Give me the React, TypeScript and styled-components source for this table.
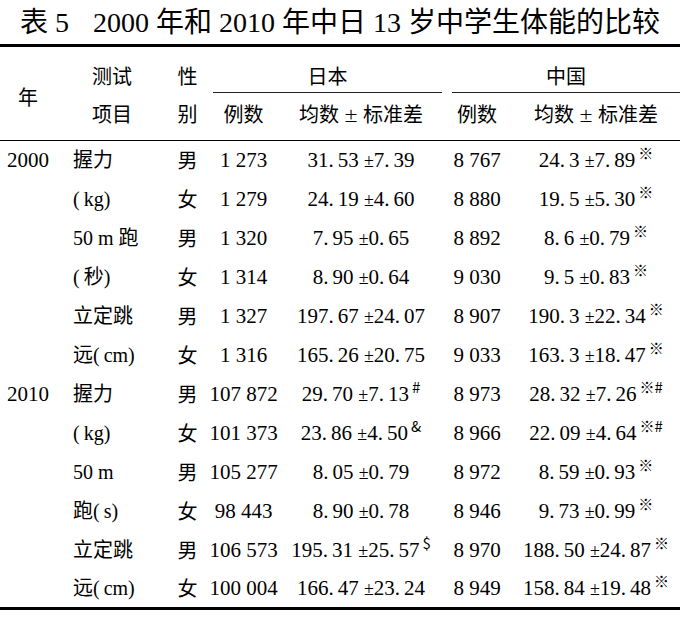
import { Fragment } from "react";
import styled, { createGlobalStyle } from "styled-components";

type Row = {
  year?: string;
  item: string;
  sex: string;
  jpN: string;
  jpMean: string;
  jpMark?: string;
  cnN: string;
  cnMean: string;
  cnMark?: string;
};

const rows: Row[] = [
  { year: "2000", item: "握力", sex: "男", jpN: "1 273", jpMean: "31.53 ±7.39", cnN: "8 767", cnMean: "24.3 ±7.89", cnMark: "※" },
  { item: "(kg)", sex: "女", jpN: "1 279", jpMean: "24.19 ±4.60", cnN: "8 880", cnMean: "19.5 ±5.30", cnMark: "※" },
  { item: "50 m 跑", sex: "男", jpN: "1 320", jpMean: "7.95 ±0.65", cnN: "8 892", cnMean: "8.6 ±0.79", cnMark: "※" },
  { item: "(秒)", sex: "女", jpN: "1 314", jpMean: "8.90 ±0.64", cnN: "9 030", cnMean: "9.5 ±0.83", cnMark: "※" },
  { item: "立定跳", sex: "男", jpN: "1 327", jpMean: "197.67 ±24.07", cnN: "8 907", cnMean: "190.3 ±22.34", cnMark: "※" },
  { item: "远(cm)", sex: "女", jpN: "1 316", jpMean: "165.26 ±20.75", cnN: "9 033", cnMean: "163.3 ±18.47", cnMark: "※" },
  { year: "2010", item: "握力", sex: "男", jpN: "107 872", jpMean: "29.70 ±7.13", jpMark: "#", cnN: "8 973", cnMean: "28.32 ±7.26", cnMark: "※#" },
  { item: "(kg)", sex: "女", jpN: "101 373", jpMean: "23.86 ±4.50", jpMark: "&", cnN: "8 966", cnMean: "22.09 ±4.64", cnMark: "※#" },
  { item: "50 m", sex: "男", jpN: "105 277", jpMean: "8.05 ±0.79", cnN: "8 972", cnMean: "8.59 ±0.93", cnMark: "※" },
  { item: "跑(s)", sex: "女", jpN: "98 443", jpMean: "8.90 ±0.78", cnN: "8 946", cnMean: "9.73 ±0.99", cnMark: "※" },
  { item: "立定跳", sex: "男", jpN: "106 573", jpMean: "195.31 ±25.57", jpMark: "$", cnN: "8 970", cnMean: "188.50 ±24.87", cnMark: "※" },
  { item: "远(cm)", sex: "女", jpN: "100 004", jpMean: "166.47 ±23.24", cnN: "8 949", cnMean: "158.84 ±19.48", cnMark: "※" },
];

// decimals in the print have a little gap after the point
const Decimal = ({ text }: { text: string }) => (
  <>
    {text.split(".").map((part, i, arr) => (
      <Fragment key={i}>
        {part}
        {i < arr.length - 1 && <Dot>.</Dot>}
      </Fragment>
    ))}
  </>
);

// the opening paren is set a bit loose, "( kg)"
const Item = ({ text }: { text: string }) => (
  <>
    {text.split("(").map((part, i, arr) => (
      <Fragment key={i}>
        {part}
        {i < arr.length - 1 && <Paren>(</Paren>}
      </Fragment>
    ))}
  </>
);

const Mean = ({ text, mark }: { text: string; mark?: string }) => {
  const [mean, sd] = text.split(" ±");
  return (
    <>
      <Decimal text={mean} /> <Pm>±</Pm>
      <Decimal text={sd} />
      {mark && <Mark>{mark}</Mark>}
    </>
  );
};

const App = () => {
  return (
    <Page>
      <GlobalStyle />
      <Title>
        表 5<TitleGap />
        2000 年和 2010 年中日 13 岁中学生体能的比较
      </Title>
      <Table>
        <colgroup>
          <col style={{ width: 56 }} />
          <col style={{ width: 112 }} />
          <col style={{ width: 39 }} />
          <col style={{ width: 73 }} />
          <col style={{ width: 162 }} />
          <col style={{ width: 70 }} />
          <col style={{ width: 168 }} />
        </colgroup>
        <thead>
          <TopHeadRow>
            <YearHead rowSpan={2}>年</YearHead>
            <Head>测试</Head>
            <Head>性</Head>
            <GroupHead colSpan={2}>
              <GroupLabel $inset={6}>日本</GroupLabel>
            </GroupHead>
            <GroupHead colSpan={2}>
              <GroupLabel $inset={10}>中国</GroupLabel>
            </GroupHead>
          </TopHeadRow>
          <SubHeadRow>
            <Head>项目</Head>
            <Head>别</Head>
            <Head>例数</Head>
            <Head>
              均数 <HeadPm>±</HeadPm> 标准差
            </Head>
            <Head>例数</Head>
            <Head>
              均数 <HeadPm>±</HeadPm> 标准差
            </Head>
          </SubHeadRow>
        </thead>
        <tbody>
          {rows.map((r, i) => (
            <BodyRow key={i}>
              <YearCell>{r.year}</YearCell>
              <ItemCell>
                <Item text={r.item} />
              </ItemCell>
              <SexCell>{r.sex}</SexCell>
              <NumCell>{r.jpN}</NumCell>
              <NumCell>
                <Mean text={r.jpMean} mark={r.jpMark} />
              </NumCell>
              <NumCell>{r.cnN}</NumCell>
              <NumCell>
                <Mean text={r.cnMean} mark={r.cnMark} />
              </NumCell>
            </BodyRow>
          ))}
        </tbody>
      </Table>
    </Page>
  );
};

const GlobalStyle = createGlobalStyle`
  html, body {
    margin: 0;
    padding: 0;
    background: #ffffff;
  }
  body {
    font-family: "Liberation Serif", "Noto Sans CJK SC", serif;
    color: #000000;
  }
`;

const Page = styled.div`
  width: 680px;
`;

const Title = styled.div`
  height: 44px;
  line-height: 46px;
  font-size: 28px;
  text-align: center;
  white-space: nowrap;
`;

const TitleGap = styled.span`
  display: inline-block;
  width: 24px;
`;

const Table = styled.table`
  width: 680px;
  border-collapse: collapse;
  table-layout: fixed;
  border-top: 3px solid #000000;
  border-bottom: 3px solid #000000;
`;

const TopHeadRow = styled.tr`
  height: 47px;
  & > th {
    vertical-align: bottom;
    padding-bottom: 5px;
  }
`;

const SubHeadRow = styled.tr`
  height: 48px;
  border-bottom: 1px solid #000000;
  & > th {
    vertical-align: top;
    padding-top: 9px;
  }
`;

const Head = styled.th`
  font-family: "Noto Sans CJK SC", sans-serif;
  font-weight: 400;
  font-size: 20px;
  line-height: 24px;
  padding: 0;
  text-align: center;
  white-space: nowrap;
`;

const YearHead = styled(Head)`
  && {
    vertical-align: middle;
    padding: 6px 0 0 0;
  }
`;

const HeadPm = styled.span`
  font-size: 15px;
`;

const GroupHead = styled(Head)`
  && {
    padding: 0;
  }
`;

const GroupLabel = styled.div<{ $inset: number }>`
  margin-left: ${(p) => p.$inset}px;
  padding-bottom: 4px;
  border-bottom: 1px solid #222222;
`;

const BodyRow = styled.tr`
  height: 39px;
  & > td {
    padding: 0;
    vertical-align: middle;
    line-height: 24px;
    white-space: nowrap;
  }
`;

const YearCell = styled.td`
  font-size: 21px;
  text-align: center;
`;

const ItemCell = styled.td`
  font-size: 20px;
  text-align: left;
  && {
    padding-left: 17px;
  }
`;

const Paren = styled.span`
  margin-right: 4px;
`;

const SexCell = styled.td`
  font-family: "Noto Sans CJK SC", sans-serif;
  font-size: 20px;
  text-align: center;
`;

const NumCell = styled.td`
  font-size: 21px;
  text-align: center;
`;

const Dot = styled.span`
  margin-right: 4px;
`;

const Pm = styled.span`
  font-size: 18px;
`;

const Mark = styled.sup`
  font-family: "Noto Sans CJK SC", sans-serif;
  font-size: 15px;
  line-height: 0;
  margin-left: 3px;
  vertical-align: 8px;
`;

export default App;
